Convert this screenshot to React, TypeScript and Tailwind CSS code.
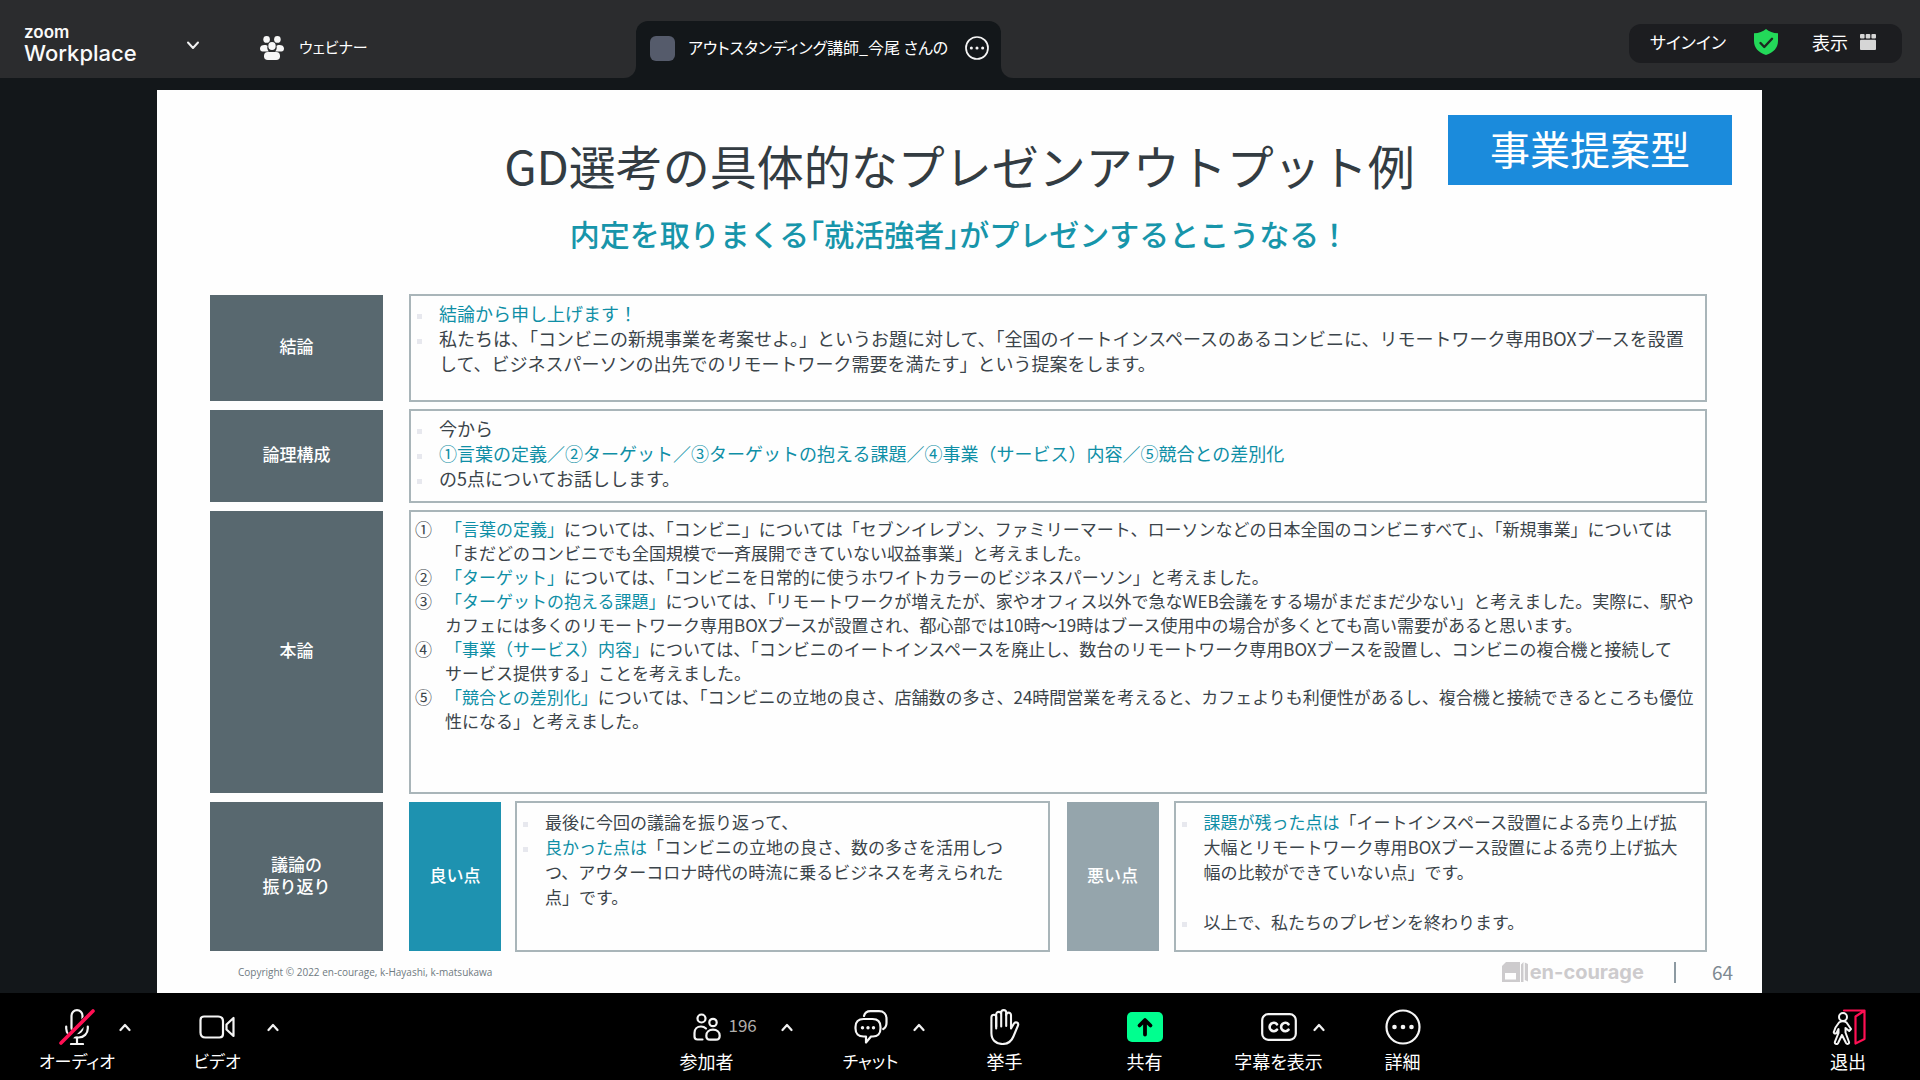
import type { ReactNode } from "react";

function ChevronDown() {
  return (
    <svg width="14" height="9" viewBox="0 0 14 9" fill="none" stroke="#f1f1f1" strokeWidth="2" strokeLinecap="round" strokeLinejoin="round">
      <path d="M2 1.5 7 7l5-5.5" />
    </svg>
  );
}

function ChevronUp() {
  return (
    <svg width="12" height="9" viewBox="0 0 12 9" fill="none" stroke="#f1f1f1" strokeWidth="2.2" strokeLinecap="round" strokeLinejoin="round">
      <path d="M1.5 7 6 2l4.500 5" />
    </svg>
  );
}

function WebinarIcon() {
  return (
    <svg width="24" height="24" viewBox="0 0 24 24" fill="#f7f7f7">
      <ellipse cx="6.600" cy="3.400" rx="3.300" ry="3.400" />
      <ellipse cx="17.400" cy="3.400" rx="3.300" ry="3.400" />
      <path d="M0 12.500C0 10 2 9 4.500 9c1.500 0 2.500.3 3 .9-.6 2 0 4 1.300 5.600H2.500C1 15.500 0 14.400 0 12.500Z" />
      <path d="M24 12.500C24 10 22 9 19.500 9c-1.500 0-2.500.3-3 .9.600 2 0 4-1.300 5.600h6.300c1.500 0 2.500-1.100 2.500-3Z" />
      <ellipse cx="12" cy="10" rx="3.700" ry="4" />
      <rect x="4" y="16" width="16" height="8" rx="3.800" />
    </svg>
  );
}

function MoreCircle({ size }: { size: number }) {
  return (
    <svg width={size} height={size} viewBox="0 0 36 36" fill="none" stroke="#f5f5f5" strokeWidth={size > 30 ? 2.2 : 2.6}>
      <circle cx="18" cy="18" r="16.500" />
      <g fill="#f5f5f5" stroke="none">
        <circle cx="9.500" cy="18" r="2.300" />
        <circle cx="18" cy="18" r="2.300" />
        <circle cx="26.500" cy="18" r="2.300" />
      </g>
    </svg>
  );
}

function ShieldIcon() {
  return (
    <svg width="24" height="26" viewBox="0 0 24 26" fill="none">
      <path d="M12 0c3 2.700 7 4.200 12 4.300V12c0 7-4.500 11.500-12 14C4.500 23.500 0 19 0 12V4.300C5 4.200 9 2.700 12 0Z" fill="#23d959" />
      <path d="m6.500 14 3.800 4L18 9.800" stroke="#1c2a20" strokeWidth="2.400" strokeLinecap="round" strokeLinejoin="round" />
    </svg>
  );
}

function ViewIcon() {
  return (
    <svg width="16" height="16" viewBox="0 0 16 16" fill="#d6d6d6">
      <rect x="0" y="0" width="4.600" height="4.600" rx="1" />
      <rect x="5.700" y="0" width="4.600" height="4.600" rx="1" />
      <rect x="11.400" y="0" width="4.600" height="4.600" rx="1" />
      <rect x="0" y="5.700" width="16" height="10.300" rx="1" />
    </svg>
  );
}

function MicOffIcon() {
  return (
    <svg width="36" height="36" viewBox="0 0 36 36" fill="none" stroke="#f5f5f5" strokeWidth="2.200" strokeLinecap="round">
      <rect x="12.500" y="1.200" width="11" height="23" rx="5.500" />
      <path d="M7.200 17.500v2c0 5 4 9 9 9h3.600c5 0 9-4 9-9v-2" />
      <path d="M18 28.500v6M12 35h12" />
      <path d="M36 1 3 36" stroke="#000" strokeWidth="7" strokeLinecap="butt" />
      <path d="M34 2 2 34" stroke="#ff0f53" strokeWidth="3.600" />
    </svg>
  );
}

function VideoIcon() {
  return (
    <svg width="36" height="24" viewBox="0 0 36 24" fill="none" stroke="#f5f5f5" strokeWidth="2.200" strokeLinejoin="round">
      <path d="M5 1.500h14c3 0 5 2 5 5V19c0 2-1.500 3.500-3.500 3.500H6.500c-3 0-5-2-5-5V5C1.500 3 3 1.500 5 1.500Z" />
      <path d="M27.500 9.500 34.500 3v18l-7-6.500Z" />
    </svg>
  );
}

function PeopleIcon() {
  return (
    <svg width="28" height="28" viewBox="0 0 28 28" fill="none" stroke="#f5f5f5" strokeWidth="2.200" strokeLinecap="round" strokeLinejoin="round">
      <circle cx="8.500" cy="5.500" r="4" />
      <circle cx="20" cy="9.500" r="3.700" />
      <path d="M9.500 26.500H4.500c-2 0-3-1.200-3-3V20c0-3.700 2.700-6.500 6.500-6.500 2 0 3.700.7 5 2" />
      <path d="M20 16.700c3.800 0 6.700 2.500 6.700 6 0 2.500-1.200 4-3.700 4h-6c-2.500 0-3.700-1.500-3.700-4 0-3.500 2.900-6 6.700-6Z" />
    </svg>
  );
}

function ChatIcon() {
  return (
    <svg width="34" height="34" viewBox="0 0 34 34" fill="none" stroke="#f5f5f5" strokeWidth="2.200" strokeLinecap="round" strokeLinejoin="round">
      <path d="M10 6c.7-3 3-4.800 6.500-4.800H25c4.500 0 7.500 3 7.500 7.500v4c0 3-1 5-3.300 6.300" />
      <path d="M9.500 9h9c5 0 8 3 8 8v1.500c0 5-3 8-7.500 8h-2L12 32.500v-6H9.500c-5 0-8-3-8-8V17c0-5 3-8 8-8Z" />
      <g fill="#f5f5f5" stroke="none">
        <circle cx="8.500" cy="17.700" r="1.700" />
        <circle cx="14" cy="17.700" r="1.700" />
        <circle cx="19.500" cy="17.700" r="1.700" />
      </g>
    </svg>
  );
}

function HandIcon() {
  return (
    <svg width="30" height="36" viewBox="0 0 30 36" fill="none" stroke="#f5f5f5" strokeWidth="2.100" strokeLinecap="round" strokeLinejoin="round">
      <path d="M6.200 19.500V8.200c0-3.200-4.800-3.200-4.800 0V24c0 7 4.600 11 11 11 5.500 0 9-2.500 11-7.500l4.600-11c1.100-2.700-2.600-4.500-4.200-1.800L21 19.500V6c0-3.200-4.800-3.200-4.800 0" />
      <path d="M6.200 17.500V5.300c0-3.200 5-3.200 5 0v12.200M11.200 17V3.600c0-3.300 5-3.300 5 0V17" />
    </svg>
  );
}

function ShareIcon() {
  return (
    <svg width="36" height="30" viewBox="0 0 36 30" fill="none">
      <rect width="36" height="30" rx="5" fill="#00ff8f" />
      <path d="M18 22.500V9M12.500 13.500 18 8l5.500 5.500" stroke="#000" strokeWidth="3.800" strokeLinecap="round" strokeLinejoin="round" />
    </svg>
  );
}

function CaptionIcon() {
  return (
    <svg width="36" height="28" viewBox="0 0 36 28" fill="none" stroke="#f5f5f5" strokeLinecap="round">
      <rect x="1.200" y="1.200" width="33.600" height="25.600" rx="6" strokeWidth="2.200" />
      <path d="M16 11.300a4.200 4.200 0 1 0 0 5.400M27.500 11.300a4.200 4.200 0 1 0 0 5.400" strokeWidth="2.600" />
    </svg>
  );
}

function LeaveIcon() {
  return (
    <svg width="36" height="36" viewBox="0 0 36 36" fill="none" strokeWidth="2.200" strokeLinecap="round" strokeLinejoin="round">
      <path d="M14 1.500h20.500v28.500l-9 4.500V7.500l8.500-5.500" stroke="#ff0f53" />
      <g stroke="#f5f5f5" strokeWidth="2">
        <circle cx="13" cy="8" r="4" />
        <path d="M9 13.500c2-1.700 5.500-1.700 7.500 0l4.500 6.500-1.800 2-3.700-3v4.500l3.500 9.500c.5 2-2 2.700-3 1L12 26l-4 8.200c-1 1.700-3.800.7-3-1.500l3.500-8.700v-4L6.500 24c-1.500 1.300-3.300 0-2.500-1.500l1.500-4Z" />
      </g>
    </svg>
  );
}

type ToolProps = {
  icon: ReactNode;
  label: string;
  arrow?: string;
  count?: string;
  kana?: boolean;
};

function Tool({ icon, label, arrow, count, kana }: ToolProps) {
  return (
    <div className="flex items-start">
      <button className="flex w-24 flex-col items-center">
        <span className="flex h-9 items-center">
          {count ? (
            <span className="grid grid-cols-[1fr_auto_1fr] items-center gap-2">
              <span className="w-8" />
              {icon}
              <span className="w-8 pb-1 text-left text-[17px] leading-5 text-[#b0aeac]">{count}</span>
            </span>
          ) : (
            icon
          )}
        </span>
        <span className={`mt-1 leading-6 whitespace-nowrap ${kana ? "text-[17px]" : "text-[18px]"}`}>{label}</span>
      </button>
      {arrow && (
        <button aria-label={`${label}のオプション`} className={`flex h-9 w-6 items-center justify-center ${arrow}`}>
          <ChevronUp />
        </button>
      )}
    </div>
  );
}

function Teal({ children }: { children: ReactNode }) {
  return <span className="text-[#0f8fa6]">{children}</span>;
}

function RowLabel({ children, className }: { children: ReactNode; className: string }) {
  return (
    <div className={`my-px flex items-center justify-center pb-1 text-center text-[17px] leading-[22px] font-medium text-white ${className}`}>
      {children}
    </div>
  );
}

function Bullet({ children }: { children?: ReactNode }) {
  return (
    <li className="flex">
      <span className="mt-[13px] mr-[17px] ml-[6px] h-[5px] w-[5px] shrink-0 bg-[#e7e8ee]" />
      <span>{children}</span>
    </li>
  );
}

function Numbered({ mark, children }: { mark: string; children: ReactNode }) {
  return (
    <li className="flex">
      <span className="w-[34px] shrink-0 pl-1">{mark}</span>
      <span>{children}</span>
    </li>
  );
}

const box = "border-2 border-[#a9b5b9] whitespace-nowrap text-[#3b444a]";
const slate = "bg-[#58686f]";

function Slide() {
  return (
    <article className="mr-[158px] ml-[157px] flex-1 bg-[#fefefe] text-[#333c42]">
      <header className="grid grid-cols-[1fr_auto_1fr] items-start pt-[25px]">
        <span />
        <div className="text-center whitespace-nowrap">
          <h1 className="mt-[22px] text-[47px] leading-[56px]">GD選考の具体的なプレゼンアウトプット例</h1>
          <h2 className="mt-5 text-[30px] leading-10 font-medium text-[#1795aa]">内定を取りまくる｢就活強者｣がプレゼンするとこうなる！</h2>
        </div>
        <p className="mr-[30px] w-[284px] justify-self-end bg-[#1b8bdc] pb-1 text-center text-[40px] leading-[66px] text-white">事業提案型</p>
      </header>

      <div className="mt-[41px] mr-[55px] ml-[53px] grid grid-cols-[173px_1fr] gap-x-[26px] gap-y-[7px]">
        <RowLabel className={slate}>結論</RowLabel>
        <ul className={`min-h-[108px] pt-[5px] text-[18px] leading-[25px] ${box}`}>
          <Bullet><Teal>結論から申し上げます！</Teal></Bullet>
          <Bullet>
            私たちは、「コンビニの新規事業を考案せよ。」というお題に対して、「全国のイートインスペースのあるコンビニに、リモートワーク専用BOXブースを設置
            <br />
            して、ビジネスパーソンの出先でのリモートワーク需要を満たす」という提案をします。
          </Bullet>
        </ul>

        <RowLabel className={slate}>論理構成</RowLabel>
        <ul className={`min-h-[94px] pt-[5px] text-[18px] leading-[25px] ${box}`}>
          <Bullet>今から</Bullet>
          <Bullet><Teal>①言葉の定義／②ターゲット／③ターゲットの抱える課題／④事業（サービス）内容／⑤競合との差別化</Teal></Bullet>
          <Bullet>の5点についてお話しします。</Bullet>
        </ul>

        <RowLabel className={slate}>本論</RowLabel>
        <ol className={`min-h-[284px] pt-[5px] text-[17px] leading-6 ${box}`}>
          <Numbered mark="①">
            <Teal>「言葉の定義」</Teal>については、「コンビニ」については「セブンイレブン、ファミリーマート、ローソンなどの日本全国のコンビニすべて」、「新規事業」については
            <br />
            「まだどのコンビニでも全国規模で一斉展開できていない収益事業」と考えました。
          </Numbered>
          <Numbered mark="②">
            <Teal>「ターゲット」</Teal>については、「コンビニを日常的に使うホワイトカラーのビジネスパーソン」と考えました。
          </Numbered>
          <Numbered mark="③">
            <Teal>「ターゲットの抱える課題」</Teal>については、「リモートワークが増えたが、家やオフィス以外で急なWEB会議をする場がまだまだ少ない」と考えました。実際に、駅や
            <br />
            カフェには多くのリモートワーク専用BOXブースが設置され、都心部では10時～19時はブース使用中の場合が多くとても高い需要があると思います。
          </Numbered>
          <Numbered mark="④">
            <Teal>「事業（サービス）内容」</Teal>については、「コンビニのイートインスペースを廃止し、数台のリモートワーク専用BOXブースを設置し、コンビニの複合機と接続して
            <br />
            サービス提供する」ことを考えました。
          </Numbered>
          <Numbered mark="⑤">
            <Teal>「競合との差別化」</Teal>については、「コンビニの立地の良さ、店舗数の多さ、24時間営業を考えると、カフェよりも利便性があるし、複合機と接続できるところも優位
            <br />
            性になる」と考えました。
          </Numbered>
        </ol>

        <RowLabel className={slate}>
          議論の
          <br />
          振り返り
        </RowLabel>
        <div className="grid grid-cols-[92px_33fr_92px_32fr]">
          <RowLabel className="bg-[#1e92b0]">良い点</RowLabel>
          <ul className={`mr-[17px] ml-[14px] min-h-[151px] pt-[6px] text-[17px] leading-[25px] ${box}`}>
            <Bullet>最後に今回の議論を振り返って、</Bullet>
            <Bullet>
              <Teal>良かった点は</Teal>「コンビニの立地の良さ、数の多さを活用しつ
              <br />
              つ、アウターコロナ時代の時流に乗るビジネスを考えられた
              <br />
              点」です。
            </Bullet>
          </ul>
          <RowLabel className="bg-[#95a5ac]">悪い点</RowLabel>
          <ul className={`ml-[15px] min-h-[151px] pt-[6px] text-[17px] leading-[25px] ${box}`}>
            <Bullet>
              <Teal>課題が残った点は</Teal>「イートインスペース設置による売り上げ拡
              <br />
              大幅とリモートワーク専用BOXブース設置による売り上げ拡大
              <br />
              幅の比較ができていない点」です。
            </Bullet>
            <li className="h-[25px]" />
            <Bullet>以上で、私たちのプレゼンを終わります。</Bullet>
          </ul>
        </div>
      </div>

      <footer className="flex h-10 items-center pr-[29px] pl-[81px]">
        <small className="font-['Open_Sans',sans-serif] text-[10px] leading-4 text-[#6f7a81]">Copyright © 2022 en-courage, k-Hayashi, k-matsukawa</small>
        <span className="ml-auto flex items-center text-[#cdcbcd]">
          <svg width="28" height="22" viewBox="0 0 28 22" fill="#cdcbcd">
            <path d="M5 1h14v20H1V5Zm-1 11v6.500h11V12Z" fillRule="evenodd" />
            <path d="M20 3.500 22.500 1v20H20ZM23.800 1.500 27 3v17.500l-3.200-1.500Z" />
          </svg>
          <span className="ml-px font-['Inter',sans-serif] text-[20px] leading-6 font-bold">en-courage</span>
        </span>
        <span className="ml-[30px] h-[21px] w-0.5 bg-[#8d9aa2]" />
        <span className="ml-9 text-[19px] leading-6 text-[#7e8a92]">64</span>
      </footer>
    </article>
  );
}

export default function App() {
  return (
    <div className="flex min-h-screen flex-col bg-[#13171a] font-['Noto_Sans_CJK_JP',sans-serif] text-white">
      <header className="flex h-[78px] shrink-0">
        <div className="flex w-[636px] shrink-0 items-start rounded-br-xl bg-[#2b2c2e] pl-6">
          <div className="mt-[23px] w-[112px] font-['Inter',sans-serif] font-semibold text-[#fafafa]">
            <div className="text-[17px] leading-[18px]">zoom</div>
            <div className="text-[22px] leading-6 font-medium">Workplace</div>
          </div>
          <button aria-label="メニュー" className="mt-[41px] ml-[50px]">
            <ChevronDown />
          </button>
          <button className="mt-9 ml-[60px] flex items-start gap-[15px] text-[15px] leading-[22px] [font-feature-settings:'palt']">
            <WebinarIcon />
            ウェビナー
          </button>
        </div>
        <div className="w-[365px] shrink-0 bg-[#2b2c2e] pt-[21px]">
          <div className="flex h-[57px] items-start rounded-t-xl bg-[#13171a] px-3 pt-[15px]">
            <span className="ml-0.5 h-[25px] w-[25px] shrink-0 rounded-md bg-[#555b6b]" />
            <span className="ml-[13px] min-w-0 flex-1 text-[16px] leading-[22px] whitespace-nowrap [font-feature-settings:'palt']">
              アウトスタンディング講師_今尾 さんの
            </span>
            <button aria-label="その他" className="shrink-0">
              <MoreCircle size={24} />
            </button>
          </div>
        </div>
        <div className="flex flex-1 items-start justify-end rounded-bl-xl bg-[#2b2c2e] pt-6 pr-[18px]">
          <div className="flex h-[39px] items-center rounded-xl bg-[#1c1d20] pr-[26px] pb-1 pl-[21px] text-[18px] leading-6">
            <button className="text-[17px] [font-feature-settings:'palt']">サインイン</button>
            <span className="ml-7">
              <ShieldIcon />
            </span>
            <button className="ml-[34px] flex items-center gap-3">
              表示
              <ViewIcon />
            </button>
          </div>
        </div>
      </header>

      <main className="flex flex-1 flex-col pt-3">
        <Slide />
      </main>

      <nav className="flex h-[87px] shrink-0 items-start justify-between bg-black pt-4 pr-6 pl-[29px] [font-feature-settings:'palt']">
        <div className="flex gap-8 pr-6">
          <Tool icon={<MicOffIcon />} label="オーディオ" arrow="-ml-3" kana />
          <Tool icon={<VideoIcon />} label="ビデオ" arrow="-ml-1" kana />
        </div>
        <div className="flex">
          <Tool icon={<PeopleIcon />} label="参加者" count="196" arrow="ml-5" />
          <span className="w-6" />
          <Tool icon={<ChatIcon />} label="チャット" arrow="-ml-3" kana />
          <span className="w-[26px]" />
          <Tool icon={<HandIcon />} label="挙手" />
          <span className="w-11" />
          <Tool icon={<ShareIcon />} label="共有" />
          <span className="w-[38px]" />
          <Tool icon={<CaptionIcon />} label="字幕を表示" arrow="-ml-5" />
          <span className="w-6" />
          <Tool icon={<MoreCircle size={36} />} label="詳細" />
        </div>
        <Tool icon={<LeaveIcon />} label="退出" />
      </nav>
    </div>
  );
}
